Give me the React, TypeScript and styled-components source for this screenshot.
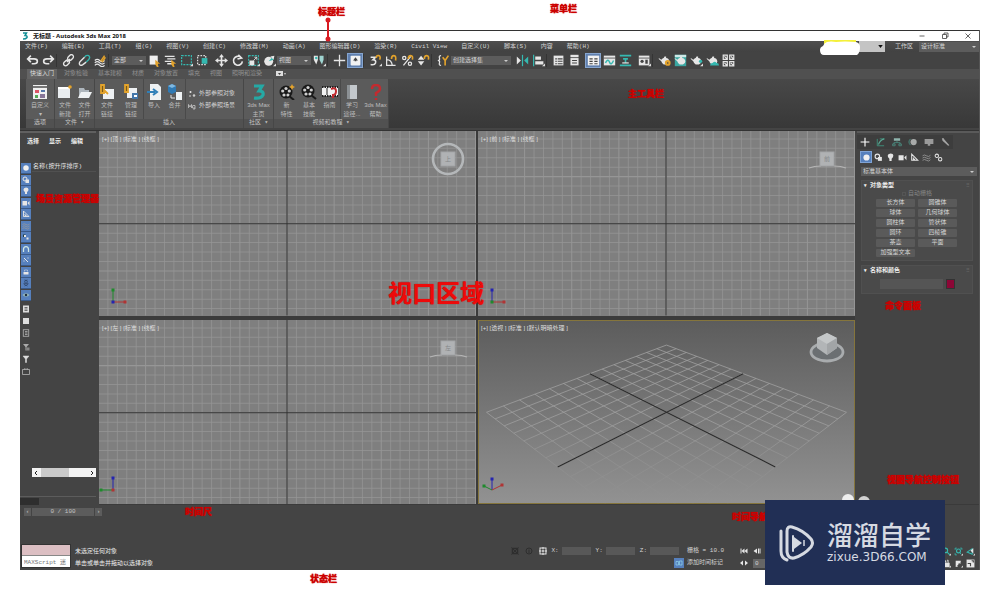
import React from "react";
import styled, { createGlobalStyle, css } from "styled-components";

const MONO = `"Liberation Mono", "Noto Sans CJK SC", monospace`;
const SANS = `"Liberation Sans", "Noto Sans CJK SC", sans-serif`;

const Global = createGlobalStyle`
  * { box-sizing: border-box; }
  body { margin: 0; background: #fff; font-family: ${MONO}; font-size: 6px; line-height: 8px; color: #d4d4d4; }
  button, input, select { font: inherit; color: inherit; border: 0; padding: 0; margin: 0; background: none; min-width: 0; }
  button { display: flex; align-items: center; justify-content: center; }
  svg { display: block; flex: none; }
`;

/* ---------- shell ---------- */
const Page = styled.div`
  position: relative;
  min-height: 100vh;
  padding: 30px 20px;
  display: flex;
  flex-direction: column;
`;
const Window = styled.div`
  flex: 1;
  display: flex;
  flex-direction: column;
  background: #444;
  border-right: 1px solid #555;
`;
const TitleBar = styled.header`
  height: 11px;
  display: flex;
  align-items: center;
  gap: 5px;
  padding: 0 6px 0 2px;
  background: #fff;
  color: #111;
  border-top: 1px solid #333;
`;
const Title = styled.h1`
  flex: 1;
  margin: 0;
  font: 700 6px/10px "Open Sans", "Noto Sans CJK SC", sans-serif;
`;
const WindowButtons = styled.div`
  display: flex;
  gap: 13px;
`;
const MenuBar = styled.nav`
  height: 11px;
  display: flex;
  align-items: center;
  justify-content: space-between;
  padding-left: 5px;
  background: linear-gradient(#4e4e4e, #424242);
`;
const MenuList = styled.div`
  display: flex;
  gap: 14px;
  white-space: nowrap;
`;
const Workspace = styled.div`
  display: flex;
  align-items: center;
  height: 11px;
  gap: 6px;
`;
const SearchBox = styled.div`
  width: 65px;
  height: 11px;
  margin-right: 4px;
  background: linear-gradient(90deg, transparent 60%, #c4c4c4 60%);
  display: flex;
  align-items: center;
  justify-content: flex-end;
  padding-right: 2px;
`;

/* ---------- shared controls ---------- */
const SelectWrap = styled.label<{ $w?: number; $h?: number }>`
  position: relative;
  display: block;
  width: ${(p) => (p.$w ? `${p.$w}px` : "auto")};
  height: ${(p) => p.$h ?? 9}px;
  background: #5c5c5c;
  flex: none;
  &::after {
    content: "";
    position: absolute;
    right: 3px;
    top: calc(50% - 1px);
    border: 2px solid transparent;
    border-top-color: #ccc;
    border-bottom: 0;
  }
  select {
    appearance: none;
    display: block;
    width: 100%;
    height: 100%;
    padding: 0 8px 0 2px;
    outline: 0;
  }
`;
function Combo({ label, value, w, h }: { label: string; value: string; w?: number; h?: number }) {
  return (
    <SelectWrap $w={w} $h={h}>
      <select aria-label={label} defaultValue={value}>
        <option>{value}</option>
      </select>
    </SelectWrap>
  );
}

const ToolBar = styled.div`
  height: 17px;
  display: flex;
  align-items: center;
  padding-left: 4px;
  background: #434343;
`;
const Tool = styled.button<{ $on?: boolean }>`
  width: 16px;
  height: 15px;
  flex: none;
  ${(p) => p.$on && css`background: #5f7fae; box-shadow: inset 0 0 0 1px #86a5cf;`}
`;
const Gap = styled.span<{ $line?: boolean }>`
  flex: none;
  width: ${(p) => (p.$line ? 4 : 3)}px;
  height: 13px;
  ${(p) => p.$line && css`border-left: 1px solid #343434;`}
`;

/* ---------- icons ---------- */
const W = "#e6e6e6";
const T = "#35b8b0";
const Y = "#e3a32c";
const D = "#444";
const Flyout = () => <path d="M16 12v4h-4z" fill="#ddd" transform="translate(1 0) scale(.95)" />;
const Pot = () => (
  <path d="M1 5l3 2 1-1q1-1 2-1l1-2 2 0 0 2q3 0 4 4q0 3-3 4H7q-2-1-3-4L1 6z" fill={W} />
);
const shapes: Record<string, React.ReactNode> = {
  undo: <path d="M2 6h8q4 0 4 3t-4 3H7M6 2L2 6l4 4" stroke={W} strokeWidth="2" fill="none" />,
  redo: <path d="M14 6H6q-4 0-4 3t4 3h3M10 2l4 4-4 4" stroke={W} strokeWidth="2" fill="none" />,
  link: (
    <g stroke={W} strokeWidth="1.7" fill="none">
      <rect x="6.5" y="2" width="8" height="5" rx="2.5" transform="rotate(-45 10.5 4.5)" />
      <rect x="1.5" y="8.500" width="8" height="5" rx="2.500" transform="rotate(-45 5.5 11)" />
      <path d="M6 10l4-4" />
    </g>
  ),
  unlink: (
    <g strokeWidth="1.7" fill="none">
      <path d="M8 4l2-2q3-1 4 1t-1 4l-3 3" stroke={T} />
      <path d="M8 4L3 9q-2 2-1 4t4 0l4-3" stroke={W} />
    </g>
  ),
  bind: (
    <g fill="none">
      <path d="M1 8q3-3 6 0t6 0M1 11q3-3 6 0t6 0M1 14q3-3 6 0t6 0" stroke={W} strokeWidth="1.5" />
      <path d="M8 9l5-7M10 10l4-6" stroke={Y} strokeWidth="1.8" />
    </g>
  ),
  pick: (
    <g>
      <path d="M2 2h10v11H2z" fill="#eee" />
      <path d="M9 7l6 5-3 0 1 4-2 0-2-3z" fill={Y} />
    </g>
  ),
  byName: (
    <g>
      <path d="M1 3h12M4 6h10M1 9h9M4 12h6" stroke={W} strokeWidth="1.6" />
      <path d="M9 7l6 5-3 0 1 4-2 0-2-3z" fill={Y} />
    </g>
  ),
  region: <><rect x="2" y="2" width="12" height="11" fill="none" stroke={T} strokeWidth="1.5" strokeDasharray="2.500 1.300" /><Flyout /></>,
  crossing: (
    <>
      <rect x="2" y="2" width="10" height="11" fill="none" stroke="#ddd" strokeWidth="1.5" strokeDasharray="2 1.500" />
      <rect x="7" y="5" width="7" height="7" fill={T} />
    </>
  ),
  move: (
    <g fill={W}>
      <path d="M7 3h2v10H7zM3 7h10v2H3z" />
      <path d="M8 0l3 4H5zM8 16l3-4H5zM0 8l4-3v6zM16 8l-4-3v6z" />
    </g>
  ),
  rotate: <path d="M12 4a5.500 5.500 0 1 0 2 5M9 1l4 4-5 1" stroke={W} strokeWidth="2" fill="none" />,
  scale: (
    <>
      <rect x="2" y="2" width="12" height="12" fill="none" stroke={T} strokeWidth="1.4" strokeDasharray="2.500 1.300" />
      <rect x="3" y="8" width="6" height="6" fill={W} />
      <path d="M8 8l4-4M9 4h3v3" stroke={W} fill="none" />
      <Flyout />
    </>
  ),
  place: (
    <>
      <circle cx="7" cy="9" r="5.500" fill={W} />
      <path d="M7 9l6-7v5z" fill={T} />
      <path d="M9 3l5-1-1 5z" fill={W} />
      <Flyout />
    </>
  ),
  pivot: (
    <>
      <path d="M1 2h5v5l-2 6-3-6z" fill={W} />
      <path d="M8 2h5v5l-2 6-3-6z" fill="#9fd4d0" />
      <circle cx="4" cy="5" r="1.500" fill={T} />
      <Flyout />
    </>
  ),
  cross: <path d="M8 1v14M1 8h14" stroke={W} strokeWidth="1.600" />,
  keyb: (
    <>
      <rect x="2" y="2" width="12" height="12" rx="1" fill="#f2f2f2" />
      <path d="M8 4l3 4H9v1H7V8H5z" fill={D} />
    </>
  ),
  snap: (
    <>
      <path d="M2 4h6L5 7q4 0 3 4-1 3-6 2" stroke={W} strokeWidth="2" fill="none" />
      <path d="M9 5q0-4 3-3t1 5" stroke={Y} strokeWidth="2" fill="none" />
      <Flyout />
    </>
  ),
  angle: (
    <>
      <path d="M2 3v11h11M2 7q6 0 7 7" stroke={W} strokeWidth="1.500" fill="none" />
      <path d="M8 6q0-4 3-4t2 6" stroke={Y} strokeWidth="2" fill="none" />
    </>
  ),
  percent: (
    <>
      <path d="M12 3L3 14" stroke={W} strokeWidth="1.600" />
      <circle cx="4" cy="5" r="2" fill="none" stroke={W} strokeWidth="1.600" />
      <circle cx="11" cy="12" r="2" fill="none" stroke={W} strokeWidth="1.600" />
      <path d="M9 6q0-4 3-4t2 5" stroke={Y} strokeWidth="2" fill="none" />
    </>
  ),
  spin: (
    <>
      <path d="M5 2l4 5H1zM5 14l4-5H1z" fill={W} />
      <path d="M9 6q0-4 3-4t2 5" stroke={Y} strokeWidth="2" fill="none" />
    </>
  ),
  sets: (
    <>
      <path d="M5 2Q2 2 3 5t-2 3q3 0 2 3t2 3" stroke={W} strokeWidth="1.500" fill="none" />
      <path d="M7 4l3 4v6M14 2l-4 6" stroke={Y} strokeWidth="2" fill="none" />
    </>
  ),
  mirror: (
    <>
      <path d="M1 3l5 5-5 5z" fill={W} />
      <path d="M8 1v14" stroke={T} strokeWidth="1.500" />
      <path d="M15 3l-5 5 5 5z" fill={T} />
    </>
  ),
  align: (
    <>
      <path d="M2 1v14" stroke={T} strokeWidth="1.500" />
      <path d="M4 3h7v4H4zM4 9h10v4H4z" fill={W} />
      <Flyout />
    </>
  ),
  table: (
    <>
      <rect x="2" y="2" width="12" height="12" fill={W} />
      <path d="M4 6h2M7 6h6M4 9h2M7 9h6M4 12h2M7 12h6" stroke={D} strokeWidth="1.300" />
    </>
  ),
  doc: (
    <>
      <rect x="3" y="1" width="10" height="3" fill={W} />
      <rect x="3" y="5" width="10" height="9" fill={W} />
      <path d="M5 8h6M5 11h6" stroke={D} strokeWidth="1.300" />
    </>
  ),
  ribbon: (
    <>
      <rect x="1" y="2" width="14" height="12" fill="#f2f2f2" />
      <path d="M3 6h4M9 6h4M3 9h4M9 9h4M3 12h4M9 12h4" stroke={D} strokeWidth="1.500" />
    </>
  ),
  curve: (
    <>
      <rect x="1" y="2" width="14" height="12" fill={W} />
      <path d="M1 5h14" stroke={D} />
      <path d="M3 11q3-6 5-1t5-2" stroke={T} strokeWidth="1.800" fill="none" />
    </>
  ),
  schematic: <><path d="M1 2h14M1 14h14" stroke={T} strokeWidth="2" /><path d="M5 5h6v2H9v4H7V7H5z" fill={T} /><path d="M4 11h8" stroke={W} strokeWidth="1.500" /></>,
  material: (
    <>
      <rect x="1" y="2" width="13" height="12" fill={W} />
      <path d="M1 5h13" stroke={D} />
      <circle cx="5" cy="9" r="2" fill={D} />
      <path d="M9 7h3v5H9z" fill={D} />
      <Flyout />
    </>
  ),
  renderSetup: <><Pot /><circle cx="12" cy="11" r="3.500" fill={Y} /><circle cx="12" cy="11" r="1" fill={D} /></>,
  frame: <><rect x="1" y="1" width="14" height="14" fill="#3aa7a1" /><rect x="1" y="1" width="14" height="3" fill="#cfe9e7" /><Pot /></>,
  render: <><Pot /><circle cx="13" cy="9" r="2" fill={T} /><Flyout /></>,
  cloud: <><Pot /><path d="M5 14q0-3 3-3 3-3 5 0 3 0 3 3z" fill={T} /></>,
  grid4: (
    <g fill="none" stroke={W} strokeWidth="1.500">
      <path d="M1.500 1.500h5v5h-5zM9.500 1.500h5v5h-5zM1.500 9.500h5v5h-5zM9.500 9.500h5v5h-5zM3 3l3 3M11 3l3 3M3 11l3 3M11 11l3 3" />
    </g>
  ),
  /* ribbon */
  custom: (
    <>
      <rect x="1" y="1" width="14" height="14" fill="#f1f1f1" />
      <path d="M1 3h14" stroke="#777" strokeWidth="2" />
      <path d="M3 6h4v3H3z" fill="#d56" /><path d="M9 6h4v2H9z" fill="#57a" /><path d="M3 11h3v3H3z" fill="#5a5" /><path d="M8 10h5v4H8z" fill="#879" />
    </>
  ),
  fileNew: <><path d="M1 3h12v11H1z" fill="#e9edf0" /><path d="M1 3h12v2H1z" fill="#fff" /><circle cx="13" cy="3" r="1.800" fill={Y} /></>,
  fileOpen: <><path d="M2 4h5l1 2h4v7H2z" fill="#aeb6bd" /><path d="M4 8h11l-3 6H1z" fill="#eef1f3" /></>,
  fileLink: <><path d="M4 5h11v10H4z" fill="#eef1f3" /><path d="M2 1h3v8H2zM5 6l4 4" stroke={Y} strokeWidth="1.800" fill="#7a5a18" /></>,
  manage: <><path d="M4 4h10v10H4z" fill="#eef1f3" /><path d="M2 1h3v7H2z" stroke={Y} strokeWidth="1.800" fill="#7a5a18" /><path d="M9 9h6v6H9z" fill="#4477aa" /><path d="M11 11h3v2h-3z" fill="#fff" /></>,
  importer: <><path d="M4 0h8l3 3v13H4z" fill="#eef1f3" /><path d="M1 8h8M7 5l4 3-4 3" stroke="#2f7fb8" strokeWidth="2" fill="none" /></>,
  merge: <><path d="M1 2l4-2 4 2v6l-4 2-4-2z" fill="#2f79b3" /><path d="M1 2l4 2 4-2-4-2z" fill="#7fb7df" /><path d="M4 11v3h4" stroke={W} fill="none" /><path d="M9 8h6v8H9z" fill="#eef1f3" /></>,
  logo3: <path d="M3 2h8L8 7q5 0 4 4-2 4-9 3" stroke="#25a9a5" strokeWidth="3.200" fill="none" />,
  reel: (
    <>
      <circle cx="7" cy="7" r="6.500" fill="#191919" />
      <g fill="#cfcfcf"><circle cx="7" cy="3.500" r="1.600" /><circle cx="3.700" cy="6" r="1.600" /><circle cx="10.300" cy="6" r="1.600" /><circle cx="5" cy="10" r="1.600" /><circle cx="9" cy="10" r="1.600" /></g>
      <path d="M10 11l5 4" stroke="#191919" strokeWidth="2" />
    </>
  ),
  reelNew: (
    <>
      <circle cx="7" cy="8" r="6.500" fill="#191919" />
      <g fill="#cfcfcf"><circle cx="7" cy="4.500" r="1.600" /><circle cx="3.700" cy="7" r="1.600" /><circle cx="10.300" cy="7" r="1.600" /><circle cx="5" cy="11" r="1.600" /><circle cx="9" cy="11" r="1.600" /></g>
      <path d="M10 12l5 4" stroke="#191919" strokeWidth="2" />
      <path d="M13 0l1 2 2 1-2 1-1 2-1-2-2-1 2-1z" fill={Y} />
    </>
  ),
  film: <><path d="M0 3h16v9H0z" fill="#f2f2f2" /><path d="M0 3h16M0 12h16" stroke="#222" strokeWidth="2" strokeDasharray="1.500 1" /><path d="M5 4v7" stroke="#222" /><path d="M9 5q5-2 5 2t-3 4v3" stroke="#c22b30" strokeWidth="2" fill="none" /></>,
  book: <><path d="M3 1h10v14H3z" fill="#c3c8cc" /><path d="M3 1h3v14H3z" fill="#8c9195" /></>,
  help: <path d="M4 5q0-4 4-4t4 4q0 2-4 4v3M8 14v2" stroke="#c22b30" strokeWidth="2.500" fill="none" />,
  ref: <><circle cx="5" cy="4" r="2" fill={W} /><circle cx="4" cy="12" r="2" fill="#aaa" /><circle cx="12" cy="11" r="2.500" fill="#ccc" /></>,
  refScene: <path d="M1 12V5l3 5 3-5v7M9 7v5h5M10 7h4v7h-4" stroke="#ccc" strokeWidth="1.500" fill="none" />,
  /* explorer and command panel */
  dot: <circle cx="8" cy="8" r="5.500" fill="#f0f0f0" />,
  shape: <><circle cx="6" cy="6" r="4" fill="none" stroke={W} strokeWidth="2" /><path d="M7 7h7v7H7z" fill={W} /></>,
  bulb: <path d="M8 1q5 0 5 4 0 3-3 5v4H6v-4Q3 8 3 5t5-4z" fill={W} />,
  camera: <><path d="M1 4h9v9H1z" fill={W} /><path d="M11 8l4-4v9z" fill={W} /></>,
  ruler: <path d="M3 2v11h11zM6 8v3h3" stroke={W} strokeWidth="1.800" fill="none" />,
  waves: <path d="M1 5q3-3 7 0t7-1M1 9q3-3 7 0t7-1M1 13q3-3 7 0t7-1" stroke="#9a9a9a" strokeWidth="1.500" fill="none" />,
  helix: <path d="M5 2q7 1 6 4T5 9t6 5M11 2Q4 3 5 6t6 3-6 5" stroke="#2f4568" strokeWidth="1.500" fill="none" />,
  gears: <><circle cx="5" cy="5" r="3" fill="none" stroke={W} strokeWidth="1.800" /><circle cx="11" cy="11" r="3" fill="none" stroke={W} strokeWidth="1.800" /></>,
  group: <><path d="M2 3h5v5H2z" fill="#1f3d42" /><path d="M4 4h4v4H4z" fill={W} /><path d="M9 9h4v4H9z" fill={W} /></>,
  arch: <path d="M3 14V9q0-6 5-6t5 6v5" stroke="#cfe6e4" strokeWidth="2.500" fill="none" />,
  bone: <path d="M4 4l8 8M11 4h2M3 10h2" stroke={W} strokeWidth="2" fill="none" />,
  box: <><path d="M3 8h10v5H3z" fill={W} /><path d="M5 7V4h6v3" stroke={W} fill="none" /></>,
  eye: <><path d="M1 8q7-7 14 0-7 7-14 0z" fill="#9bb" /><circle cx="8" cy="8" r="2.500" fill="#234" /></>,
  listA: <><rect x="2" y="1" width="12" height="14" fill="#ddd" /><path d="M5 5h6M5 8h6M5 11h6" stroke={D} strokeWidth="1.500" /></>,
  blank: <rect x="2" y="2" width="12" height="12" fill="#ddd" />,
  listB: <><rect x="2.500" y="1.500" width="11" height="13" fill="none" stroke="#bbb" strokeWidth="1.500" /><path d="M6 5h5M6 8h5M6 11h5" stroke="#bbb" strokeWidth="1.500" /></>,
  funnel: <path d="M2 2h12L9 8v7H7V8z" fill="#ddd" stroke="#ddd" />,
  funnelOff: <><path d="M2 2h12L9 8v7H7V8z" fill="#aaa" /><rect x="9" y="9" width="6" height="6" fill="#888" /></>,
  basket: <path d="M1 5h14v10H1zM5 5l1-3M11 5l-1-3" stroke="#bbb" strokeWidth="1.500" fill="none" />,
  plus: <path d="M8 1v14M1 8h14" stroke="#fff" strokeWidth="1.800" />,
  modify: <><path d="M2 3v11h11M14 3H6" stroke="#3f8f7b" strokeWidth="1.500" fill="none" /><path d="M4 12q2-7 9-9" stroke="#5aa794" strokeWidth="1.800" fill="none" /></>,
  tree: <><path d="M3 2h10v4H3z" fill="#8fb5ae" /><path d="M8 6v3M3 12V9h10v3M1 11h4v3H1zM11 11h4v3h-4z" stroke="#4b8c80" strokeWidth="1.300" fill="none" /></>,
  motion: <><circle cx="9" cy="8" r="5" fill="#a8aaa9" /><path d="M4 3q-5 5 0 10" stroke="#4b8c80" strokeWidth="1.500" fill="none" /></>,
  display: <path d="M1 3h14v8H1zM6 11h4v3H6z" fill="#9a9a9a" />,
  wrench: <path d="M3 2l1 4 9 8 2-1-8-9-1-2z" fill="#a5a5a5" />,
  lock: <><rect x="3" y="3" width="10" height="10" fill="none" stroke="#2e2e2e" strokeWidth="3" /><path d="M1 1l14 14M15 1L1 15" stroke="#2e2e2e" strokeWidth="2" /></>,
  info: <><circle cx="8" cy="8" r="6" fill="none" stroke="#2e2e2e" strokeWidth="2" /><path d="M8 5v7" stroke="#2e2e2e" strokeWidth="2" /></>,
  absolute: <><rect x="2" y="2" width="12" height="12" fill="none" stroke={W} strokeWidth="2" /><path d="M8 0v5M8 11v5M0 8h5M11 8h5" stroke={W} strokeWidth="2" /><circle cx="8" cy="8" r="2" fill={W} /></>,
  tag: <path d="M2 5h5v7H2zM9 4h5v8H9z" fill="none" stroke="#8fd0e8" strokeWidth="1.500" />,
  start: <path d="M1 3h2v10H1zM9 3v10L3 8zM15 3v10L9 8z" fill={W} />,
  prev: <path d="M8 3v10L1 8zM10 3h2v10h-2zM13 3h2v10h-2z" fill={W} />,
  keys: <path d="M0 8l6-5v10zM16 8l-6-5v10z" fill={W} />,
  zoomT: <><circle cx="6" cy="6" r="4" fill="none" stroke={T} strokeWidth="2" /><path d="M9 9l5 5" stroke={T} strokeWidth="2" /><Flyout /></>,
  zoomAll: <><circle cx="8" cy="7" r="3.500" fill="none" stroke={T} strokeWidth="2" /><path d="M2 5V2h3M11 2h3v3M2 11v3h3M10 10l3 3" stroke={T} strokeWidth="1.500" fill="none" /><Flyout /></>,
  fov: <><path d="M2 9l9-6v10z" fill="none" stroke={T} strokeWidth="1.800" /><path d="M8 6l5-4v10z" fill={W} /><Flyout /></>,
  hand: <><path d="M3 7h10v7H5zM5 3h2v4M9 2h2v5" fill={W} stroke={W} /><Flyout /></>,
  orbit: <><path d="M3 3h9v5H8l-2 6H3z" fill={W} /><path d="M5 13L12 6" stroke="#777" strokeWidth="1.500" fill="none" /><Flyout /></>,
  maxi: <><path d="M1 1h14v14H1z" fill={W} /><path d="M3 8h5v5M10 3h3v3" stroke={D} strokeWidth="2" fill="none" /></>,
};
function Icon({ n, s = 13 }: { n: string; s?: number }) {
  return (
    <svg width={s} height={s} viewBox="0 0 16 16" aria-hidden="true">
      {shapes[n]}
    </svg>
  );
}
const tools = (names: string[], on?: string, size = 13) =>
  names.map((n) => (
    <Tool key={n} aria-label={n} $on={n === on}>
      <Icon n={n} s={size} />
    </Tool>
  ));

/* ---------- ribbon ---------- */
const RibbonTabs = styled.div`
  height: 10px;
  display: flex;
  align-items: center;
  padding-left: 7px;
  gap: 10px;
  background: #505050;
  color: #909090;
  white-space: nowrap;
`;
const RibbonTab = styled.button<{ $on?: boolean }>`
  height: 10px;
  ${(p) => p.$on && css`background: #646464; color: #ddd; padding: 0 3px; margin-right: -3px;`}
`;
const Ribbon = styled.div`
  height: 49px;
  display: flex;
  padding-left: 6px;
  background: linear-gradient(#484848, #383838);
`;
const RibbonPanel = styled.section`
  display: flex;
  flex-direction: column;
  border-right: 1px solid #474747;
  background: #5b5b5b;
`;
const RibbonBody = styled.div`
  flex: 1;
  display: flex;
`;
const RibbonFoot = styled.footer`
  height: 9px;
  background: #515151;
  text-align: center;
  color: #c4c4c4;
`;
const RibbonButton = styled.button<{ $w: number; $edge?: boolean }>`
  width: ${(p) => p.$w}px;
  flex-direction: column;
  justify-content: flex-start;
  padding-top: 5px;
  gap: 1px;
  white-space: nowrap;
  color: #bdbdbd;
  font-family: ${SANS};
  ${(p) => p.$edge && css`border-right: 1px solid #4a4a4a;`}
`;
const RefColumn = styled.div`
  display: flex;
  flex-direction: column;
  justify-content: center;
  gap: 4px;
  width: 57px;
  padding-top: 2px;
  button { justify-content: flex-start; gap: 3px; padding-left: 2px; white-space: nowrap; }
`;
function Big({ icon, lines, w, edge }: { icon: string; lines: string[]; w: number; edge?: boolean }) {
  return (
    <RibbonButton $w={w} $edge={edge}>
      <Icon n={icon} s={16} />
      {lines.map((l) => <span key={l}>{l}</span>)}
    </RibbonButton>
  );
}

/* ---------- main area ---------- */
const Main = styled.main`
  flex: 1;
  margin-top: 2px;
  border-top: 1px solid #333;
  display: grid;
  grid-template-columns: 79px minmax(0, 1fr) 124px;
`;
const Explorer = styled.aside`
  display: flex;
  flex-direction: column;
  border-top: 2px solid #606060;
  margin-right: 3px;
`;
const ExplorerTabs = styled.div`
  display: flex;
  gap: 10px;
  padding: 5px 0 0 7px;
  height: 29px;
  font-weight: 700;
  color: #eee;
  align-items: flex-start;
`;
const ExplorerBody = styled.div`
  flex: 1;
  display: grid;
  grid-template-columns: 12px 1fr;
`;
const IconRail = styled.div`
  padding: 1px 1px 0 1px;
`;
const FilterStack = styled.div`
  display: grid;
  height: 138px;
  grid-template-rows: repeat(12, 1fr);
`;
const Filter = styled.button<{ $on?: boolean }>`
  width: 10px;
  height: 11px;
  ${(p) => p.$on && css`background: #5680bd; border-bottom: 1px solid #3a5a88;`}
`;
const ExtraStack = styled.div<{ $top: number }>`
  display: flex;
  flex-direction: column;
  gap: 1px;
  margin-top: ${(p) => p.$top}px;
`;
const TreeList = styled.div`
  display: flex;
  flex-direction: column;
  justify-content: space-between;
`;
const TreeHead = styled.div`
  height: 10px;
  padding: 1px;
  border-bottom: 1px solid #505050;
  white-space: nowrap;
  color: #e6e6e6;
`;
const HScroll = styled.div`
  height: 9px;
  margin-bottom: 19px;
  background: #f3f3f3;
  display: flex;
  justify-content: space-between;
  align-items: center;
  padding: 0 1px;
`;
const HThumb = styled.span`
  width: 28px;
  height: 9px;
  margin-right: 18px;
  background: #cacaca;
`;
const ExplorerFoot = styled.div`
  border-top: 1px solid #5c5c5c;
  height: 9px;
  padding-top: 1px;
  &::before { content: ""; display: block; width: 19px; height: 7px; background: #2e2e2e; }
`;

const Views = styled.section`
  display: grid;
  grid-template: 1fr 1fr / 1fr 1fr;
  gap: 4px 2px;
  padding-bottom: 1px;
  background: #3b3b3b;
`;
const View = styled.div<{ $active?: boolean }>`
  position: relative;
  overflow: hidden;
  background: ${(p) => (p.$active ? "linear-gradient(#5c5c5c, #929292)" : "#7f7f7f")};
  ${(p) => p.$active && css`outline: 1px solid #85753c; outline-offset: -1px;`}
  > svg:first-child { position: absolute; inset: 0; width: 100%; height: 100%; }
`;
const ViewLabel = styled.span`
  position: absolute;
  left: 3px;
  top: 4px;
  color: #dedede;
  font-family: ${SANS};
  white-space: pre;
`;
const CubeSpot = styled.div`
  position: absolute;
  right: 8px;
  top: 8px;
`;
const GizmoSpot = styled.div`
  position: absolute;
  left: 0;
  bottom: 4px;
`;

const STEP = 9.4;
const FlatGrid = () => {
  const ix = Array.from({ length: 41 }, (_, i) => i - 20);
  return (
    <svg viewBox="0 0 377 184" preserveAspectRatio="xMidYMid slice" aria-hidden="true">
      <g stroke="#969696" strokeWidth="1">
        {ix.map((i) => <path key={`v${i}`} d={`M${188 + i * STEP} 0V184`} strokeOpacity={i % 5 ? 0.75 : 1} />)}
        {ix.slice(10, 31).map((i) => <path key={`h${i}`} d={`M0 ${92.5 + i * STEP}H377`} strokeOpacity={i % 5 ? 0.75 : 1} />)}
      </g>
      <path d="M188 0V184M0 92.500H377" stroke="#303030" />
    </svg>
  );
};

/* projects a ground point, both axes running from -1 to 1 */
const project = (u: number, v: number) => {
  const s = (u - v) / 2;
  const t = (u + v) / 2;
  const k = 1 - 0.346 * t;
  return `${(188.5 + (179.5 * s) / k).toFixed(1)} ${(92 + (90.2 * t) / k).toFixed(1)}`;
};
const PerspectiveGrid = () => {
  const ix = Array.from({ length: 15 }, (_, i) => (i - 7) / 7);
  return (
    <svg viewBox="0 0 377 184" preserveAspectRatio="xMidYMid slice" aria-hidden="true">
      <defs>
        <linearGradient id="fade" gradientUnits="userSpaceOnUse" x1="0" y1="25" x2="0" y2="178">
          <stop offset="0" stopColor="#a0a0a0" />
          <stop offset="0.5" stopColor="#9e9e9e" />
          <stop offset="1" stopColor="#969696" stopOpacity="0.1" />
        </linearGradient>
      </defs>
      <g stroke="url(#fade)" strokeWidth="0.8" fill="none">
        {ix.map((a) => (
          <path key={a} d={`M${project(a, -1)}L${project(a, 1)}M${project(-1, a)}L${project(1, a)}`} />
        ))}
      </g>
      <path d={`M${project(0, -1)}L${project(0, 1)}M${project(-1, 0)}L${project(1, 0)}`} stroke="#2a2a2a" strokeWidth="1.100" />
    </svg>
  );
};

type Axis = { x: number; y: number; c: string };
function Gizmo({ ox = 14, axes }: { ox?: number; axes: Axis[] }) {
  return (
    <svg width="34" height="24" viewBox="0 0 34 24" aria-hidden="true">
      {axes.map((a) => (
        <g key={a.c}>
          <path d={`M${ox} 14L${ox + a.x} ${14 + a.y}`} stroke={a.c} />
          <rect x={ox + a.x - 1.5} y={12.5 + a.y} width="3" height="3" fill={a.c} />
        </g>
      ))}
    </svg>
  );
}
const R = "#b03434";
const G = "#1f8a2c";
const B = "#2424b0";

function Cube({ kind, face }: { kind: "ring" | "flat" | "solid"; face?: string }) {
  return (
    <svg width="40" height="40" viewBox="0 0 40 40" aria-hidden="true">
      {kind === "ring" && <circle cx="20" cy="20" r="15" fill="none" stroke="#b4b7b9" strokeWidth="2.600" />}
      {kind === "flat" && <path d="M2 29q5-2 12-2M27 27q7 0 12 2" stroke="#b5b5b5" strokeWidth="1.200" fill="none" />}
      {kind === "solid" ? (
        <>
          <ellipse cx="20" cy="24" rx="16" ry="9" fill="#6b6f72" stroke="#a9acae" strokeWidth="2.800" />
          <path d="M20 5l10 5v10l-10 7-10-7V10z" fill="#b2b5b7" />
          <path d="M20 5l10 5-10 6-10-6z" fill="#c4c7c8" />
          <path d="M20 16l10-6v10l-10 7z" fill="#a2a5a7" />
        </>
      ) : (
        <>
          <rect x="13" y="13" width="14" height="14" fill="#b0b2b4" stroke="#a3a5a7" />
          <text x="20" y="22" fontSize="6" textAnchor="middle" fill="#85888a" fontFamily="Noto Sans CJK SC">{face}</text>
        </>
      )}
    </svg>
  );
}

/* ---------- command panel ---------- */
const Command = styled.aside`
  margin-left: 2px;
  padding: 2px 6px 0 4px;
  border-top: 2px solid #5a5a5a;
  border-bottom: 1px solid #3a3a3a;
`;
const CommandTabs = styled.div`
  display: flex;
  align-items: center;
  background: #3d3d3d;
  height: 14px;
  width: 96px;
  margin-left: -4px;
`;
const Categories = styled.div`
  display: flex;
  margin: 2px 0 4px -1px;
`;
const Category = styled.button<{ $on?: boolean }>`
  width: 12px;
  height: 12px;
  ${(p) => p.$on && css`background: #5680bd; box-shadow: inset 0 0 0 1px #7fa3d4;`}
`;
const ComboRow = styled.div`
  margin: 0 -4px 4px 0;
`;
const Rollout = styled.section`
  background: #4a4a4a;
  border: 1px solid #505050;
  margin-bottom: 4px;
  padding: 0 14px 3px;
`;
const RolloutHead = styled.h2`
  margin: 0 -13px;
  padding-left: 7px;
  font: 700 6px/8px ${SANS};
  color: #eee;
  position: relative;
  &::before { content: "▾"; position: absolute; left: 1px; font-size: 5px; }
  &::after { content: "⠿"; position: absolute; right: 1px; color: #666; font-size: 5px; }
`;
const AutoGrid = styled.label`
  display: flex;
  align-items: center;
  justify-content: center;
  gap: 2px;
  height: 10px;
  color: #858585;
  input { width: 4px; height: 4px; appearance: none; border: 1px solid #555; }
`;
const ObjectGrid = styled.div`
  display: grid;
  grid-template-columns: 39px 39px;
  gap: 2px 3px;
`;
const ObjectButton = styled.button`
  height: 8px;
  background: #5a5a5a;
  border-radius: 1px;
  white-space: nowrap;
`;
const NameRow = styled.div`
  display: flex;
  gap: 3px;
  margin: 5px 0 1px 4px;
  input { width: 63px; height: 10px; background: #555; }
  button { width: 9px; height: 10px; background: #8c0636; border: 1px solid #333; }
`;

/* ---------- bottom bars ---------- */
const TimeLine = styled.div`
  display: flex;
  align-items: center;
  height: 13px;
  gap: 1px;
  padding: 0 4px;
`;
const TimeButton = styled.button<{ $w: number }>`
  width: ${(p) => p.$w}px;
  height: 8px;
  background: #5c5c5c;
  color: #c4c4c4;
`;
const Status = styled.footer`
  display: flex;
  align-items: flex-start;
  height: 26px;
  margin-top: 26px;
  padding-left: 1px;
`;
const Script = styled.div`
  width: 50px;
  height: 24px;
  border: 1px solid #333;
  color: #777;
  input { display: block; width: 48px; height: 11px; padding-left: 2px; background: #fff; }
  input:first-child { background: #dcbfc3; border-bottom: 1px solid #888; }
`;
const Messages = styled.div`
  flex: 1;
  padding: 3px 4px;
  display: flex;
  flex-direction: column;
  gap: 4px;
  font-family: ${SANS};
  color: #eee;
`;
const Coords = styled.div`
  display: flex;
  align-items: center;
  gap: 2px;
  height: 14px;
  margin-right: 2px;
  button { width: 12px; }
  label { display: flex; align-items: center; gap: 2px; margin-right: 3px; }
  input { width: 29px; height: 8px; margin-left: 1px; background: #585858; }
`;
const GridInfo = styled.div`
  width: 66px;
  display: grid;
  grid-template: 12px 12px / 10px 1fr;
  align-items: center;
  gap: 0 3px;
  padding-top: 1px;
  margin-left: -10px;
  white-space: nowrap;
  span { grid-column: 2; }
`;
const TagButton = styled.button`
  width: 10px;
  height: 10px;
  background: #5680bd;
`;
const Playback = styled.div`
  width: 200px;
  display: grid;
  grid-template: 12px 12px / 13px 1fr;
  align-items: center;
  justify-items: start;
  padding-top: 1px;
  input { width: 30px; height: 9px; padding-left: 2px; background: #666; }
`;
const NavTools = styled.div`
  display: grid;
  grid-template: 12px 12px / repeat(3, 12px);
  align-items: center;
  padding-top: 1px;
  padding-right: 3px;
`;

/* ---------- callouts over the window ---------- */
const Note = styled.span<{ $x: number; $y: number; $big?: boolean }>`
  position: absolute;
  left: ${(p) => p.$x}px;
  top: ${(p) => p.$y}px;
  color: ${(p) => (p.$big ? "#ee0a0a" : "#cc0000")};
  font: ${(p) => (p.$big ? "700 24px/30px" : "900 9px/12px")} "Noto Sans CJK SC", sans-serif;
  text-shadow: 0 0 1px ${(p) => (p.$big ? "#a00" : "#c00")};
  white-space: nowrap;
`;
const Overlay = styled.div<{ $x: number; $y: number }>`
  position: absolute;
  left: ${(p) => p.$x}px;
  top: ${(p) => p.$y}px;
`;
const Badge = styled.div`
  position: absolute;
  left: 765px;
  top: 500px;
  width: 180px;
  height: 85px;
  display: flex;
  align-items: center;
  gap: 12px;
  padding-left: 14px;
  background: #212f55;
  color: #d6dae2;
`;
const BadgeText = styled.div`
  display: flex;
  flex-direction: column;
  strong { font: 500 26px/28px ${SANS}; }
  span { font: 400 12px/14px "DejaVu Sans", sans-serif; }
`;

const menus = ["文件(F)", "编辑(E)", "工具(T)", "组(G)", "视图(V)", "创建(C)", "修改器(M)", "动画(A)", "图形编辑器(D)", "渲染(R)", "Civil View", "自定义(U)", "脚本(S)", "内容", "帮助(H)"];
const ribbonTabs = ["快速入门", "对象检验", "基本建模", "材质", "对象放置", "填充", "视图", "照明和渲染"];
const objects = ["长方体", "圆锥体", "球体", "几何球体", "圆柱体", "管状体", "圆环", "四棱锥", "茶壶", "平面", "加强型文本"];

export default function App() {
  return (
    <Page>
      <Global />
      <Window>
        <TitleBar>
          <svg width="6" height="8" viewBox="0 0 12 16" aria-hidden="true">
            <path d="M2 2h7L6 7q5 0 4 4-2 3-8 3" stroke="#138f96" strokeWidth="3" fill="none" />
          </svg>
          <Title>无标题 - Autodesk 3ds Max 2018</Title>
          <WindowButtons>
            {["M3 8h10", "M3 5h8v8H3zM6 5V2h8v8h-3", "M3 3l10 10M13 3L3 13"].map((d) => (
              <button key={d} aria-label="window control">
                <svg width="10" height="8" viewBox="0 0 16 16"><path d={d} stroke="#333" strokeWidth="1.500" fill="none" /></svg>
              </button>
            ))}
          </WindowButtons>
        </TitleBar>
        <MenuBar>
          <MenuList>{menus.map((m) => <button key={m}>{m}</button>)}</MenuList>
          <Workspace>
            <SearchBox>
              <svg width="5" height="3" viewBox="0 0 6 4"><path d="M0 0h6L3 4z" fill="#111" /></svg>
            </SearchBox>
            <span>工作区</span>
            <Combo label="工作区" value="设计标准" w={60} h={10} />
          </Workspace>
        </MenuBar>
        <ToolBar>
          {tools(["undo", "redo"])}<Gap $line />
          {tools(["link", "unlink", "bind"])}<Gap $line />
          <Combo label="选择过滤器" value="全部" w={34} />
          {tools(["pick", "byName", "region", "crossing"])}<Gap />
          {tools(["move", "rotate", "scale", "place"])}
          <Combo label="参考坐标系" value="视图" w={34} />
          {tools(["pivot"])}<Gap $line />
          {tools(["cross", "keyb"], "keyb")}<Gap $line />
          {tools(["snap", "angle", "percent", "spin"])}<Gap $line />
          {tools(["sets"])}
          <Combo label="命名选择集" value="创建选择集" w={60} />
          <Gap />
          {tools(["mirror", "align"])}<Gap $line />
          {tools(["table", "doc"])}<Gap />
          {tools(["ribbon", "curve", "schematic"], "ribbon")}<Gap />
          {tools(["material"])}<Gap $line />
          {tools(["renderSetup", "frame", "render", "cloud", "grid4"])}
        </ToolBar>
        <RibbonTabs>
          {ribbonTabs.map((t, i) => <RibbonTab key={t} $on={i === 0}>{t}</RibbonTab>)}
          <button aria-label="ribbon options">
            <svg width="14" height="6" viewBox="0 0 14 6"><path d="M4 0h7v5H4z" fill="#ddd" /><path d="M6 2h3l-1.500 2z" fill="#444" /><path d="M12 2h2l-1 2z" fill="#ccc" /></svg>
          </button>
        </RibbonTabs>
        <Ribbon>
          <RibbonPanel>
            <RibbonBody><Big icon="custom" lines={["自定义", "▾"]} w={28} /></RibbonBody>
            <RibbonFoot>选项</RibbonFoot>
          </RibbonPanel>
          <RibbonPanel>
            <RibbonBody>
              <Big icon="fileNew" lines={["文件", "新建"]} w={20} />
              <Big icon="fileOpen" lines={["文件", "打开"]} w={19} />
            </RibbonBody>
            <RibbonFoot>文件 ▾</RibbonFoot>
          </RibbonPanel>
          <RibbonPanel>
            <RibbonBody>
              <Big icon="fileLink" lines={["文件", "链接"]} w={24} />
              <Big icon="manage" lines={["管理", "链接"]} w={25} edge />
              <Big icon="importer" lines={["导入"]} w={20} />
              <Big icon="merge" lines={["合并"]} w={22} edge />
              <RefColumn>
                <button><Icon n="ref" s={8} />外部参照对象</button>
                <button><Icon n="refScene" s={8} />外部参照场景</button>
              </RefColumn>
            </RibbonBody>
            <RibbonFoot>插入</RibbonFoot>
          </RibbonPanel>
          <RibbonPanel>
            <RibbonBody><Big icon="logo3" lines={["3ds Max", "主页"]} w={29} /></RibbonBody>
            <RibbonFoot>社区 ▾</RibbonFoot>
          </RibbonPanel>
          <RibbonPanel>
            <RibbonBody>
              <Big icon="reelNew" lines={["新", "特性"]} w={25} />
              <Big icon="reel" lines={["基本", "技能"]} w={20} />
              <Big icon="film" lines={["指南"]} w={22} edge />
              <Big icon="book" lines={["学习", "途径..."]} w={22} />
              <Big icon="help" lines={["3ds Max", "帮助"]} w={25} />
            </RibbonBody>
            <RibbonFoot>视频和教程 ▾</RibbonFoot>
          </RibbonPanel>
        </Ribbon>

        <Main>
          <Explorer>
            <ExplorerTabs><button>选择</button><button>显示</button><button>编辑</button></ExplorerTabs>
            <ExplorerBody>
              <IconRail>
                <FilterStack>
                  {["dot", "shape", "bulb", "camera", "ruler", "waves", "group", "arch", "bone", "box", "helix", "eye"].map((n) => (
                    <Filter key={n} $on aria-label={n}><Icon n={n} s={8} /></Filter>
                  ))}
                </FilterStack>
                <ExtraStack $top={2}>
                  {["listA", "blank", "listB"].map((n) => <Filter key={n} aria-label={n}><Icon n={n} s={8} /></Filter>)}
                </ExtraStack>
                <ExtraStack $top={3}>
                  {["funnelOff", "funnel", "basket"].map((n) => <Filter key={n} aria-label={n}><Icon n={n} s={8} /></Filter>)}
                </ExtraStack>
              </IconRail>
              <TreeList>
                <TreeHead>名称(按升序排序)</TreeHead>
                <HScroll>
                  <svg width="6" height="6" viewBox="0 0 6 6"><path d="M4 1L2 3l2 2" stroke="#222" fill="none" /></svg>
                  <HThumb />
                  <svg width="6" height="6" viewBox="0 0 6 6"><path d="M2 1l2 2-2 2" stroke="#222" fill="none" /></svg>
                </HScroll>
              </TreeList>
            </ExplorerBody>
            <ExplorerFoot />
          </Explorer>
          <Views>
            <View>
              <FlatGrid />
              <ViewLabel>{"[+] [顶 ] [标准 ] [线框 ]"}</ViewLabel>
              <CubeSpot><Cube kind="ring" face="上" /></CubeSpot>
              <GizmoSpot><Gizmo axes={[{ x: 0, y: -12, c: G }, { x: 12, y: 0, c: R }, { x: 0, y: 0, c: B }]} /></GizmoSpot>
            </View>
            <View>
              <FlatGrid />
              <ViewLabel>{"[+] [前 ] [标准 ] [线框 ]"}</ViewLabel>
              <CubeSpot><Cube kind="flat" face="前" /></CubeSpot>
              <GizmoSpot><Gizmo axes={[{ x: 0, y: -12, c: B }, { x: 12, y: 0, c: R }, { x: 0, y: 0, c: G }]} /></GizmoSpot>
            </View>
            <View>
              <FlatGrid />
              <ViewLabel>{"[+] [左 ] [标准 ] [线框 ]"}</ViewLabel>
              <CubeSpot><Cube kind="flat" face="左" /></CubeSpot>
              <GizmoSpot><Gizmo axes={[{ x: 0, y: -12, c: B }, { x: -12, y: 0, c: G }, { x: 0, y: 0, c: R }]} /></GizmoSpot>
            </View>
            <View $active>
              <PerspectiveGrid />
              <ViewLabel>{"[+] [透视 ] [标准 ] [默认明暗处理 ]"}</ViewLabel>
              <CubeSpot><Cube kind="solid" /></CubeSpot>
              <GizmoSpot><Gizmo axes={[{ x: 0, y: -11, c: B }, { x: 10, y: -5, c: R }, { x: -8, y: -4, c: G }]} /></GizmoSpot>
            </View>
          </Views>
          <Command>
            <CommandTabs>{tools(["plus", "modify", "tree", "motion", "display", "wrench"], undefined, 10)}</CommandTabs>
            <Categories>
              {["dot", "shape", "bulb", "camera", "ruler", "waves", "gears"].map((n, i) => (
                <Category key={n} $on={i === 0} aria-label={n}><Icon n={n} s={9} /></Category>
              ))}
            </Categories>
            <ComboRow><Combo label="类别" value="标准基本体" /></ComboRow>
            <Rollout>
              <RolloutHead>对象类型</RolloutHead>
              <AutoGrid><input type="checkbox" />自动栅格</AutoGrid>
              <ObjectGrid>{objects.map((o) => <ObjectButton key={o}>{o}</ObjectButton>)}</ObjectGrid>
            </Rollout>
            <Rollout>
              <RolloutHead>名称和颜色</RolloutHead>
              <NameRow><input aria-label="名称" /><button aria-label="颜色" /></NameRow>
            </Rollout>
          </Command>
        </Main>

        <TimeLine>
          <TimeButton $w={7}>‹</TimeButton>
          <TimeButton $w={62}>0 / 100</TimeButton>
          <TimeButton $w={7}>›</TimeButton>
        </TimeLine>
        <Status>
          <Script>
            <input aria-label="宏录制器" />
            <input aria-label="侦听器" defaultValue="MAXScript 迷" />
          </Script>
          <Messages><span>未选定任何对象</span><span>单击或单击并拖动以选择对象</span></Messages>
          <Coords>
            {["lock", "info", "absolute"].map((n) => <button key={n} aria-label={n}><Icon n={n} s={8} /></button>)}
            {["X:", "Y:", "Z:"].map((l) => <label key={l}>{l}<input /></label>)}
          </Coords>
          <GridInfo>
            <span>栅格 = 10.0</span>
            <TagButton aria-label="时间标记"><Icon n="tag" s={8} /></TagButton>
            <span>添加时间标记</span>
          </GridInfo>
          <Playback>
            <button aria-label="start"><Icon n="start" s={8} /></button>
            <button aria-label="prev"><Icon n="prev" s={8} /></button>
            <button aria-label="keys"><Icon n="keys" s={8} /></button>
            <input aria-label="当前帧" defaultValue="0" />
          </Playback>
          <NavTools>
            {["zoomT", "zoomAll", "fov", "hand", "orbit", "maxi"].map((n) => (
              <button key={n} aria-label={n}><Icon n={n} s={9} /></button>
            ))}
          </NavTools>
        </Status>
      </Window>

      <Note $x={318} $y={6}>标题栏</Note>
      <Note $x={550} $y={3}>菜单栏</Note>
      <Note $x={628} $y={88}>主工具栏</Note>
      <Note $x={36} $y={193}>场景资源管理器</Note>
      <Note $x={885} $y={300}>命令面板</Note>
      <Note $x={887} $y={474}>视图导航控制按钮</Note>
      <Note $x={185} $y={506}>时间尺</Note>
      <Note $x={732} $y={511}>时间导航区域</Note>
      <Note $x={310} $y={573}>状态栏</Note>
      <Note $x={388} $y={277} $big>视口区域</Note>
      <Overlay $x={324} $y={17}>
        <svg width="8" height="25" viewBox="0 0 8 25" aria-hidden="true">
          <path d="M4 3v19" stroke="#d81b22" strokeWidth="2" />
          <circle cx="4" cy="3" r="2.500" fill="#d81b22" /><circle cx="4" cy="22" r="2.500" fill="#d81b22" />
        </svg>
      </Overlay>
      <Overlay $x={819} $y={39}>
        <svg width="42" height="17" viewBox="0 0 42 17" aria-hidden="true">
          <path d="M5 1h32v4H5z" fill="#f4f03a" />
          <path d="M8 3q4-1 9 0 8-1 20 0 4 1 4 5 0 6-3 8H5q-4 0-4-5 0-3 3-4 1-3 4-4z" fill="#fff" />
        </svg>
      </Overlay>
      <Overlay $x={841} $y={493}>
        <svg width="32" height="14" viewBox="0 0 32 14" aria-hidden="true">
          <circle cx="7" cy="7" r="6" fill="#eee" /><circle cx="23" cy="9" r="6" fill="#d2d2d2" />
        </svg>
      </Overlay>
      <Badge>
        <svg width="36" height="38" viewBox="0 0 36 38" aria-hidden="true">
          <g fill="none" stroke="#d6dae2" strokeWidth="3" strokeLinecap="round">
            <path d="M2 7v20q0 7 6 9" />
            <path d="M8 28V7q0-5 5-4 11 3 19 12 3 4 0 8-7 8-17 11-6 1-7-6z" />
            <path d="M14 27V12" strokeWidth="2" />
          </g>
          <path d="M15 13l8 6-8 6z" fill="#d6dae2" />
          <path d="M25 16v6" stroke="#d6dae2" strokeWidth="1.500" />
        </svg>
        <BadgeText><strong>溜溜自学</strong><span>zixue.3D66.COM</span></BadgeText>
      </Badge>
    </Page>
  );
}
